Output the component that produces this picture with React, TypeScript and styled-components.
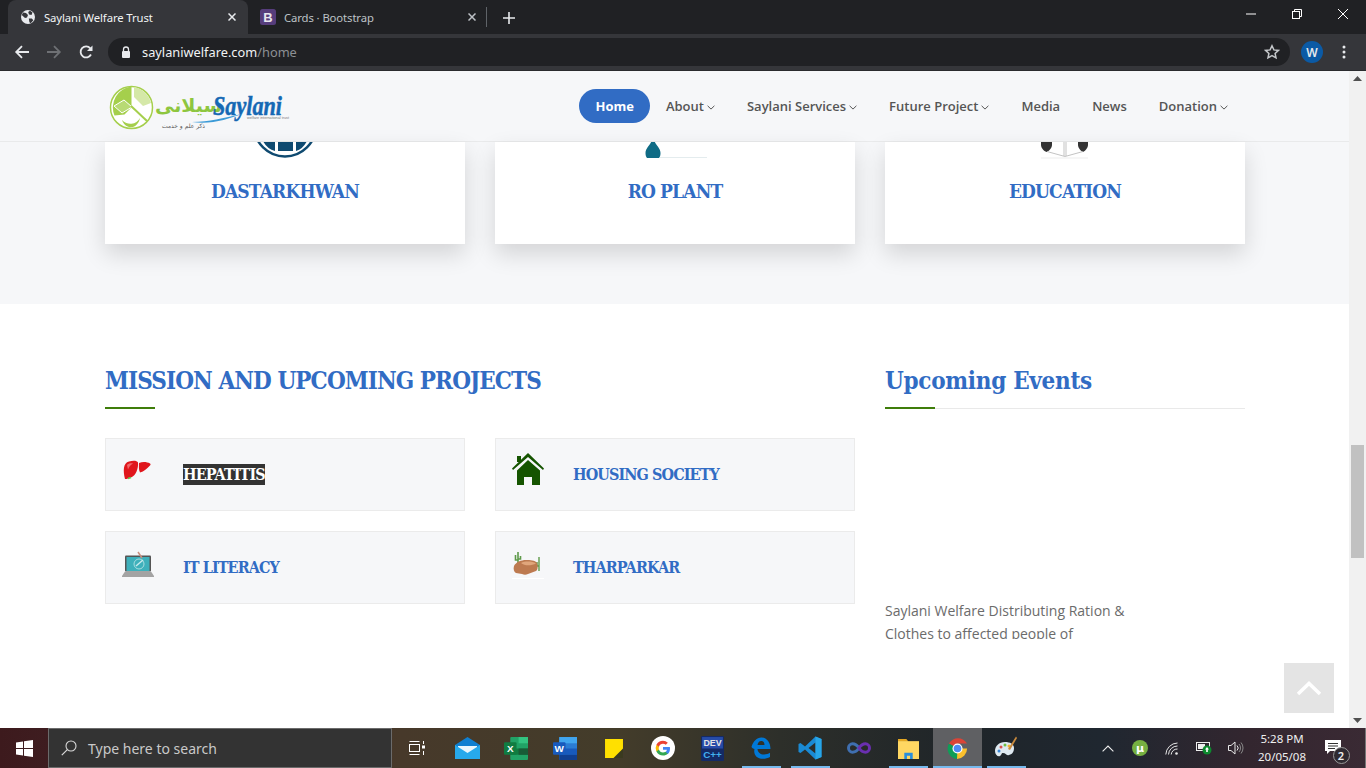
import React from "react";
import styled, { createGlobalStyle } from "styled-components";

const SERIF = `"DejaVu Serif Condensed", "DejaVu Serif", "Liberation Serif", serif`;

const Global = createGlobalStyle`
  html, body { margin: 0; padding: 0; overflow: hidden; background: #fff; }
  * { box-sizing: border-box; }
`;

const Shell = styled.div`
  width: 1366px; height: 768px; display: flex; flex-direction: column; overflow: hidden;
  font-family: "Open Sans", "Noto Sans", sans-serif;
`;

/* ---------- browser chrome ---------- */
const TabStrip = styled.div`
  height: 34px; background: #202124; display: flex; align-items: flex-end; padding-left: 8px; flex: none;
`;
const Tab = styled.div<{ $active?: boolean }>`
  width: 240px; height: 34px; border-radius: 8px 8px 0 0; display: flex; align-items: center;
  padding: 0 12px 0 12px; gap: 8px;
  background: ${p => (p.$active ? "#35363a" : "transparent")};
  color: ${p => (p.$active ? "#f1f3f4" : "#bdc1c6")};
  font: 11.3px "Noto Sans", "Open Sans", sans-serif; letter-spacing: -0.1px;
`;
const TabTitle = styled.span` flex: 1; white-space: nowrap; `;
const TabDivider = styled.div` width: 1px; height: 20px; background: #5f6368; margin: 0 0 7px -2px; `;
const NewTab = styled.div` margin: 0 0 10px 16px; display: flex; `;
const WindowControls = styled.div`
  margin-left: auto; align-self: flex-start; display: flex; align-items: center; height: 28px; gap: 36px; padding-right: 18px;
`;
const Toolbar = styled.div`
  height: 37px; background: #35363a; border-bottom: 1px solid #2a2b2e; display: flex; align-items: center; padding: 0 0 0 14px; flex: none;
`;
const NavIcons = styled.div` display: flex; align-items: center; gap: 16px; margin-right: 14px; `;
const Omnibox = styled.div`
  width: 1182px; height: 28px; border-radius: 14px; background: #202124; display: flex; align-items: center; padding: 0 10px 0 13px;
  font: 12.8px "Noto Sans", "Open Sans", sans-serif; color: #f1f3f4;
`;
const Url = styled.span` margin-left: 11px; flex: 1; `;
const UrlPath = styled.span` color: #8d9094; `;
const Avatar = styled.div`
  width: 22px; height: 22px; border-radius: 50%; background: #0b5aa5; color: #e8eaed; margin-left: 11px;
  display: flex; align-items: center; justify-content: center; font: 600 12px "Noto Sans", sans-serif;
`;
const MenuDots = styled.div` margin-left: 19px; display: flex; `;

/* ---------- page ---------- */
const Viewport = styled.div` flex: 1; display: flex; min-height: 0; `;
const Page = styled.div` flex: 1; position: relative; overflow: hidden; background: #fff; `;
const Header = styled.header`
  height: 71px; background: #f6f7f9; border-bottom: 1px solid #e9eaeb; display: flex; align-items: center;
  padding: 0 105px 0 108px;
`;
const Logo = styled.div` display: flex; align-self: flex-start; margin-top: 11px; `;
const Nav = styled.nav` margin-left: auto; display: flex; align-items: center; `;
const NavItem = styled.a<{ $active?: boolean }>`
  display: flex; align-items: center; height: 34px; white-space: nowrap; border-radius: 17px;
  padding: 0 16px;
  font: ${p => (p.$active ? 700 : 600)} 13px "Open Sans", sans-serif;
  color: ${p => (p.$active ? "#fff" : "#555")};
  background: ${p => (p.$active ? "#316cc4" : "transparent")};
`;
const Caret = styled.svg` margin-left: 3px; margin-top: 2px; `;

const ServicesBand = styled.section`
  background: #f6f7f9; padding: 0 105px 60px; display: grid; grid-template-columns: repeat(3, 360px); gap: 30px;
`;
const ServiceCard = styled.div`
  height: 102px; background: #fff; box-shadow: 0 10px 22px rgba(0, 0, 0, .14); display: flex; flex-direction: column; align-items: center;
`;
const CardIcon = styled.div`
  height: 17px; overflow: hidden; display: flex; justify-content: center; width: 100%;
  svg { margin-top: -1px; flex: none; }
`;
const CardTitle = styled.h3`
  margin: 19px 0 0; font: bold 19px/26px ${SERIF}; letter-spacing: -.85px; color: #316cc4;
`;

const Content = styled.section`
  padding: 60px 105px 0; display: grid; grid-template-columns: 750px 360px; gap: 30px;
`;
const SectionHead = styled.div<{ $rule?: boolean }>`
  position: relative; height: 45px; border-bottom: 1px solid ${p => (p.$rule ? "#e9e9e9" : "transparent")};
  &::after { content: ""; position: absolute; left: 0; bottom: -1px; width: 50px; height: 2px; background: #3f7d0a; }
`;
const SectionTitle = styled.h2<{ $tight?: boolean }>`
  margin: 0; font: bold 24px/34px ${SERIF}; color: #316cc4; white-space: nowrap;
  letter-spacing: ${p => (p.$tight ? "-.93px" : "-.3px")};
`;
const ProjectGrid = styled.div`
  margin-top: 29px; display: grid; grid-template-columns: repeat(2, 360px); gap: 20px 30px;
`;
const ProjectCard = styled.div`
  height: 73px; background: #f6f7f9; border: 1px solid #ebebeb; display: flex; align-items: center; padding: 0 0 0 15px;
`;
const ProjectIcon = styled.div` width: 33px; height: 33px; margin-top: -10px; margin-right: 29px; display: flex; align-items: center; justify-content: center; flex: none; `;
const ProjectName = styled.span<{ $selected?: boolean }>`
  font: bold 16px/21px ${SERIF}; letter-spacing: -.9px; white-space: nowrap;
  color: ${p => (p.$selected ? "#fff" : "#316cc4")};
  background: ${p => (p.$selected ? "#333" : "transparent")};
`;
const EventBody = styled.p`
  margin: 0; padding-top: 190px; height: 230px; overflow: hidden; width: 250px;
  font: 14px/23px "Open Sans", sans-serif; color: #6b6b6b;
`;
const ToTop = styled.div`
  position: absolute; right: 15px; bottom: 15px; width: 50px; height: 50px; background: #e4e4e4; display: flex; align-items: center; justify-content: center;
`;

const Scrollbar = styled.div`
  width: 17px; background: #f1f1f1; display: flex; flex-direction: column; align-items: center; justify-content: space-between; padding: 5px 0; position: relative; flex: none;
`;
const Thumb = styled.div` position: absolute; top: 374px; left: 2px; width: 13px; height: 113px; background: #c1c1c1; `;

/* ---------- taskbar ---------- */
const Taskbar = styled.footer`
  height: 40px; flex: none; display: flex; align-items: stretch; color: #fff;
  background: linear-gradient(90deg, #3d1a1d 0, #3e1d20 48px, #47392a 400px, #433c2a 620px, #2d2f2a 780px, #1f2529 960px, #1f2730 1100px, #33262f 1250px, #3a2a34 1366px);
`;
const StartButton = styled.div` width: 48px; display: flex; align-items: center; justify-content: center; `;
const SearchBox = styled.div`
  width: 344px; background: #333; border: 1px solid #6b6b6b; display: flex; align-items: center; padding-left: 12px; gap: 11px;
  font: 14px "Noto Sans", "Open Sans", sans-serif; color: #c9c9c9;
`;
const TaskApps = styled.div` display: flex; `;
const TaskApp = styled.div<{ $open?: boolean; $active?: boolean }>`
  width: 49px; display: flex; align-items: center; justify-content: center; position: relative;
  background: ${p => (p.$active ? "#5f6063" : "transparent")};
  &:first-child { width: 50.5px; padding-right: 1.5px; }
  &::after {
    content: ""; position: absolute; left: ${p => (p.$active ? "0" : "5px")}; right: ${p => (p.$active ? "0" : "5px")};
    bottom: 0; height: 2px; background: ${p => (p.$open ? "#76b9ed" : "transparent")};
  }
`;
const Tray = styled.div` margin-left: auto; display: flex; align-items: center; padding-right: 10px; border-right: 1px solid #777; `;
const TrayIcon = styled.div` width: 32px; display: flex; justify-content: center; align-items: center; `;
const Clock = styled.div`
  width: 58px; margin-left: 1px; text-align: center; font: 11.5px/18px "Noto Sans", "Open Sans", sans-serif; color: #f0f0f0;
`;
const Notify = styled.div` width: 44px; align-self: stretch; display: flex; justify-content: center; align-items: center; padding-bottom: 3px; position: relative; `;
const NotifyBadge = styled.span`
  position: absolute; left: 21.5px; top: 19px; width: 17px; height: 17px; border-radius: 50%; border: 1px solid #999; background: #2f2a31;
  font: 600 11px/15px "Noto Sans", sans-serif; text-align: center; color: #eee;
`;

/* ---------- drawings ---------- */
const Caretdown = () => (
  <Caret width="8" height="5" viewBox="0 0 8 5"><path d="M.6.8L4 4.100 7.400.8" fill="none" stroke="#555" strokeWidth="1" /></Caret>
);

const SaylaniLogo = () => (
  <svg width="184" height="50" viewBox="0 0 184 50">
    <circle cx="23.500" cy="25.500" r="21" fill="#fff" stroke="#a5cf4c" strokeWidth="1.500" />
    <path d="M23.500 4.500v21l-7 7-10 1A21 21 0 0 1 23.500 4.500z" fill="#a5cf4c" />
    <path d="M6 24l10-6 8 7-10 6z" fill="#b8da74" stroke="#fff" strokeWidth="1" />
    <path d="M26 5a21 21 0 0 1 17 16l-8 3-9-9z" fill="#d5e8a8" />
    <path d="M23 24l16 15" stroke="#a5cf4c" strokeWidth="2" />
    <path d="M32 36a11 11 0 0 1-18 2c2 6 7 8 11 7 3-1 6-4 7-9z" fill="#a5cf4c" />
    <text x="47" y="30" fontFamily="'DejaVu Sans', sans-serif" fontWeight="700" fontSize="19" fill="#8ec63f">سیلانی</text>
    <text x="105" y="33" fontFamily="'Liberation Serif', serif" fontStyle="italic" fontWeight="700" fontSize="28" fill="#1568b4" stroke="#1568b4" strokeWidth=".5" textLength="69" lengthAdjust="spacingAndGlyphs">Saylani</text>
    <path d="M84 40c18 0 30-4 50-8-14 5-31 11-50 8z" fill="#3c9bd7" />
    <text x="139" y="37" fontFamily="'Liberation Sans', sans-serif" fontSize="4" fill="#777" textLength="42" lengthAdjust="spacingAndGlyphs">welfare international trust</text>
    <text x="54" y="46" fontFamily="'DejaVu Sans', sans-serif" fontSize="6" fill="#555">ذکر علم و خدمت</text>
  </svg>
);

const GlobeIcon = () => (
  <svg width="16" height="16" viewBox="0 0 16 16">
    <circle cx="8" cy="8" r="7" fill="#e8eaed" />
    <path d="M3 3.500l3 .5 2 2-1 2.500-2 .5-3.200-3zM10 1.800l2.500 1.800-1 2.400-2.500-.5-.8-2.500zM8.800 9.500h3l1.500 1.800-2.600 3-1.300-1z" fill="#35363a" />
  </svg>
);
const BootstrapIcon = () => (
  <svg width="16" height="16" viewBox="0 0 16 16">
    <rect width="16" height="16" rx="2.500" fill="#563d7c" />
    <text x="8" y="12.500" textAnchor="middle" fontFamily="'Liberation Sans', sans-serif" fontWeight="700" fontSize="13" fill="#e8e6ee">B</text>
  </svg>
);
const CloseX = ({ color }: { color: string }) => (
  <svg width="8" height="8" viewBox="0 0 8 8"><path d="M.5.5l7 7M7.500.5l-7 7" stroke={color} strokeWidth="1.500" /></svg>
);
const Arrow = ({ color, flip }: { color: string; flip?: boolean }) => (
  <svg width="16" height="16" viewBox="0 0 16 16" style={flip ? { transform: "scaleX(-1)" } : undefined}>
    <path d="M15 8H2.500M8 2.200L2.200 8 8 13.800" fill="none" stroke={color} strokeWidth="1.800" />
  </svg>
);
const Reload = () => (
  <svg width="16" height="16" viewBox="0 0 16 16">
    <path d="M13 10.500A5.500 5.500 0 1 1 12.300 4.300" fill="none" stroke="#e8eaed" strokeWidth="1.800" />
    <path d="M14.500 1.500v5.500H9z" fill="#e8eaed" />
  </svg>
);
const Lock = () => (
  <svg width="10" height="12" viewBox="0 0 10 12">
    <path d="M2.500 5V3.500a2.500 2.500 0 0 1 5 0V5" fill="none" stroke="#e8eaed" strokeWidth="1.300" />
    <rect x="1" y="5" width="8" height="7" rx="1" fill="#e8eaed" />
  </svg>
);
const Star = () => (
  <svg width="16" height="16" viewBox="0 0 16 16">
    <path d="M8 1.800l1.900 4.100 4.500.5-3.300 3 .9 4.500L8 11.600l-4 2.300.9-4.500-3.300-3 4.500-.5z" fill="none" stroke="#c4c7ca" strokeWidth="1.500" />
  </svg>
);

const Dastarkhwan = () => (
  <svg width="60" height="18" viewBox="0 0 60 18">
    <circle cx="30" cy="-15.500" r="31" fill="none" stroke="#0f4a70" strokeWidth="2.500" />
    <rect x="23" y="0" width="15" height="10" fill="#0f4a70" />
    <path d="M8 0h12v10Q12 8 8 0zM52 0H41v10Q48 8 52 0z" fill="#0f4a70" />
  </svg>
);
const RoPlant = () => (
  <svg width="70" height="18" viewBox="0 0 70 18">
    <path d="M11.500 0h3c1 4 6 7 6 12 0 2-.5 4-1.500 5H7c-1-1-1.500-3-1.500-5 0-5 5-8 6-12z" fill="#0f6b85" />
    <rect x="20" y="16" width="47" height="1" fill="#e4ecee" />
  </svg>
);
const Education = () => (
  <svg width="50" height="18" viewBox="0 0 50 18">
    <path d="M1 0h11v4c0 3-3 6-5.500 7C4 10 1 7 1 4zM38 0h10v4c0 3-3 6-5 7-2-1-5-4-5-7z" fill="#333" />
    <path d="M7 10.500l18 5 18-5M24 0v15M26 0v15" fill="none" stroke="#b4b4b4" strokeWidth=".8" />
    <rect x="1" y="16.500" width="47" height="1" fill="#eee" />
  </svg>
);

const Liver = () => (
  <svg width="30" height="22" viewBox="0 0 30 22">
    <path d="M2 20C0 12 0 4 6 2.500c4-1 8-1 9 1 .5 6-2 13-7 15-2 .8-4 1.500-6 1.500z" fill="#e0161c" />
    <path d="M16 4c4-1.500 8-1 11 .5 1 .5.5 1.500 0 2-3 3-6 6-10 7-1.500-3-1-6-1-9.500z" fill="#e0161c" />
    <path d="M4 6c1-1.500 4-2 6-1.500-2 1-4 3-5 6z" fill="#f0686b" />
    <path d="M5 19.500l3-1" stroke="#5ccf4e" strokeWidth="1.500" />
  </svg>
);
const House = () => (
  <svg width="32" height="33" viewBox="0 0 32 33">
    <path d="M0 15.500L16 0l16 15.500-1 1.500L16 4 1 17z" fill="#155400" />
    <rect x="5" y="3" width="4" height="6" fill="#155400" />
    <path d="M5 17.500L16 7l12 10.500V32h-8v-8h-8v8H5z" fill="#155400" />
  </svg>
);
const Laptop = () => (
  <svg width="32" height="28" viewBox="0 0 32 28">
    <rect x="3" y="6.500" width="26" height="16" rx="1" fill="#555" />
    <rect x="4.500" y="8" width="23" height="14" fill="#3eb0bb" />
    <circle cx="17" cy="15" r="5" fill="none" stroke="#a8dde0" strokeWidth="1" />
    <path d="M14 17l7-6" stroke="#c8eaec" strokeWidth="1.500" />
    <path d="M16 3l4 6" stroke="#c98e7e" strokeWidth="1.500" />
    <path d="M3 22.500h26l3 4.500v1H0v-1z" fill="#a3a3a3" />
  </svg>
);
const Desert = () => (
  <svg width="32" height="33" viewBox="0 0 32 33">
    <path d="M6 6v13M3.500 9v5H6M8.500 10v3H6" fill="none" stroke="#5e9a4a" strokeWidth="1.600" />
    <path d="M27 11v14M25 16v4h2" fill="none" stroke="#5e9a4a" strokeWidth="1.400" />
    <path d="M2 20c2-4 7-6 12-6 4 0 9 0 11 3 1 3 1 7-1 8l-8 3c-2 1-4 1-6 0l-6-1c-2-1-3-4-2-7z" fill="#bd7a50" />
    <path d="M9 17c4-2 11-2 15 .5-4 2-11 3-15-.5z" fill="#e0a67c" />
    <rect y="32" width="32" height="1" fill="#fff" />
  </svg>
);

const WinLogo = () => (
  <svg width="17" height="17" viewBox="0 0 17 17">
    <path d="M0 2.400l7-1v6.600H0zM8 1.200L17 0v8H8zM0 9h7v6.600l-7-1zM8 9h9v8l-9-1.200z" fill="#fff" />
  </svg>
);
const SearchGlass = () => (
  <svg width="16" height="16" viewBox="0 0 16 16">
    <circle cx="10" cy="6" r="5" fill="none" stroke="#d8d8d8" strokeWidth="1.100" />
    <path d="M6.300 9.700L.8 15.200" stroke="#d8d8d8" strokeWidth="1.200" />
  </svg>
);
const TaskView = () => (
  <svg width="16" height="16" viewBox="0 0 16 16" fill="none" stroke="#fff" strokeWidth="1">
    <rect x=".5" y="4.500" width="10" height="7" />
    <path d="M.5 1.500h10M.5 14.500h10M14.500 1v3M14.500 11v4" />
    <rect x="13" y="5.500" width="3" height="3" fill="#fff" stroke="none" />
  </svg>
);
const MailIcon = () => (
  <svg width="25" height="22" viewBox="0 0 25 22">
    <path d="M0 8L12.500 0 25 8v14H0z" fill="#0f7fd1" />
    <path d="M3 9h19v6l-9.500 5L3 15z" fill="#e9f6fd" />
    <path d="M0 8l12.500 8L25 8v14H0z" fill="#27a9ec" />
  </svg>
);
const ExcelIcon = () => (
  <svg width="24" height="23" viewBox="0 0 23 22">
    <rect x="6" y="0" width="17" height="22" rx="1" fill="#21a366" />
    <rect x="14" y="0" width="9" height="6" fill="#33c481" />
    <rect x="6" y="11" width="17" height="6" fill="#107c41" />
    <rect x="14" y="11" width="9" height="6" fill="#185c37" />
    <rect x="0" y="5" width="12" height="12" rx="1" fill="#107c41" />
    <text x="6" y="14.500" textAnchor="middle" fontFamily="'Liberation Sans', sans-serif" fontWeight="700" fontSize="9.500" fill="#fff">X</text>
  </svg>
);
const WordIcon = () => (
  <svg width="24" height="23" viewBox="0 0 23 22">
    <rect x="6" y="0" width="17" height="22" rx="1" fill="#2b7cd3" />
    <rect x="6" y="0" width="17" height="6" fill="#41a5ee" />
    <rect x="6" y="11" width="17" height="6" fill="#185abd" />
    <rect x="6" y="17" width="17" height="5" fill="#103f91" />
    <rect x="0" y="5" width="12" height="12" rx="1" fill="#185abd" />
    <text x="6" y="14.500" textAnchor="middle" fontFamily="'Liberation Sans', sans-serif" fontWeight="700" fontSize="9.500" fill="#fff">W</text>
  </svg>
);
const StickyIcon = () => (
  <svg width="18" height="19" viewBox="0 0 17 18">
    <rect width="17" height="18" fill="#ffe000" />
    <path d="M17 9l-9 9h9z" fill="#3a3a20" />
  </svg>
);
const GoogleIcon = () => (
  <svg width="24" height="24" viewBox="0 0 48 48">
    <circle cx="24" cy="24" r="24" fill="#fff" />
    <path d="M38 25c0-1-.1-2-.3-3H24v5.700h7.900c-.4 2-1.400 3.500-3 4.600v3.800h4.800C36.500 33.500 38 29.600 38 25z" fill="#4285f4" />
    <path d="M24 39c4 0 7.300-1.300 9.700-3.600l-4.800-3.800c-1.300.9-3 1.400-4.900 1.400-3.800 0-7-2.500-8.100-6h-5v3.900C13.300 35.800 18.300 39 24 39z" fill="#34a853" />
    <path d="M15.900 27c-.6-1.800-.6-3.900 0-5.700v-3.900h-5a15 15 0 0 0 0 13.500z" fill="#fbbc05" />
    <path d="M24 15.300c2.100 0 4 .7 5.500 2.200l4.200-4.200A14.500 14.500 0 0 0 24 9.500c-5.700 0-10.700 3.200-13.100 7.900l5 3.900c1.100-3.500 4.300-6 8.100-6z" fill="#ea4335" />
  </svg>
);
const DevIcon = () => (
  <svg width="23" height="25" viewBox="0 0 22 24">
    <rect width="22" height="24" rx="1" fill="#142a66" />
    <rect x="1" y="1" width="20" height="11" fill="#274ca8" />
    <text x="11" y="10" textAnchor="middle" fontFamily="'Liberation Sans', sans-serif" fontWeight="700" fontSize="8.500" fill="#e6e6e6">DEV</text>
    <text x="11" y="21" textAnchor="middle" fontFamily="'Liberation Sans', sans-serif" fontWeight="700" fontSize="9.500" fill="#43b1ee">C++</text>
  </svg>
);
const EdgeIcon = () => (
  <svg width="20" height="22" viewBox="0 0 20 22">
    <path d="M.5 10C2 4 6.500 0 11 .5c5 .5 8.500 5 8.500 11.500H6.500c.2 3.500 3 5.500 6.500 5.500 2.200 0 4.500-.7 6-1.700v4.200c-2 1.200-4.600 1.800-7 1.800C5.500 21.800 2.200 17 3.500 12 2.700 12 1.200 11 .5 10zm6-2h7c0-2.500-1.200-4-3.300-4C8 4 6.800 5.800 6.500 8z" fill="#0078d7" />
  </svg>
);
const VSCodeIcon = () => (
  <svg width="24" height="24" viewBox="0 0 24 24">
    <path d="M17.500.5L7 10.500 2.500 7 .5 8v8l2 1L7 13.500 17.500 23.500 23.500 21V3zM17.500 6.500v11L10.500 12z" fill="#1a8ad4" />
    <path d="M17.500.5l6 2.500v18l-6 2.500z" fill="#27a6e8" />
  </svg>
);
const InfinityIcon = () => (
  <svg width="24" height="12" viewBox="0 0 24 12" fill="none" strokeWidth="3">
    <path d="M12 6C10 3 7.500 1.800 5.500 1.800S1.500 3.500 1.500 6s2 4.200 4 4.200S10 9 12 6z" stroke="#3f6fb0" />
    <path d="M12 6c2-3 4.500-4.200 6.500-4.200s4 1.700 4 4.200-2 4.200-4 4.200S14 9 12 6z" stroke="#6a2fb0" />
  </svg>
);
const FolderIcon = () => (
  <svg width="21" height="21" viewBox="0 0 20 20">
    <path d="M0 1h8l2 2.500H0z" fill="#e5a823" />
    <rect y="3" width="20" height="17" fill="#ffd762" />
    <path d="M6 20v-6h8v6h-2.500v-3h-3v3z" fill="#2a8fdc" />
  </svg>
);
const ChromeIcon = () => (
  <svg width="23" height="23" viewBox="0 0 48 48">
    <path d="M24 24L6 13.500A22 22 0 0 1 44 13.500H24z" fill="#db4437" />
    <path d="M24 24L6 13.500A22 22 0 0 0 23 46l10-20z" fill="#0f9d58" />
    <path d="M24 24h20A22 22 0 0 1 23 46z" fill="#fbc02d" />
    <circle cx="24" cy="24" r="10.500" fill="#fff" />
    <circle cx="24" cy="24" r="8" fill="#4e8bf5" />
  </svg>
);
const PaletteIcon = () => (
  <svg width="24" height="24" viewBox="0 0 24 24">
    <path d="M11 6C5 6 1 10 1 15c0 4 3 6 5 5 2-1 1-3 3-3 3 0 3 3 6 2 4-1 5-4 5-7 0-4-4-6-9-6z" fill="#dfeaf2" />
    <circle cx="7" cy="11" r="1.500" fill="#d9534f" /><circle cx="11" cy="9" r="1.500" fill="#6fbf45" /><circle cx="15" cy="10" r="1.500" fill="#f2b632" /><circle cx="5" cy="15" r="1.500" fill="#3a87d6" />
    <path d="M22 .5L14 13l2 1L23 2z" fill="#c98a3d" />
  </svg>
);
const UTorrent = () => (
  <svg width="16" height="16" viewBox="0 0 16 16">
    <circle cx="8" cy="8" r="8" fill="#76b041" />
    <text x="8" y="12" textAnchor="middle" fontFamily="'DejaVu Sans', sans-serif" fontWeight="700" fontSize="11" fill="#fff">µ</text>
  </svg>
);
const Chevron = () => (
  <svg width="12" height="7" viewBox="0 0 12 7"><path d="M.6 6.400L6 1l5.400 5.400" fill="none" stroke="#eee" strokeWidth="1.100" /></svg>
);
const Wifi = () => (
  <svg width="14" height="13" viewBox="0 0 14 13" fill="none" stroke="#e8e8e8" strokeWidth="1">
    <path d="M.8 12.500A12 12 0 0 1 12.500 1M3.500 12.500A9 9 0 0 1 12.500 4M6.200 12.500A6 6 0 0 1 12.500 7" />
    <circle cx="11.500" cy="11.500" r="1.300" fill="#e8e8e8" stroke="none" />
  </svg>
);
const Battery = () => (
  <svg width="16" height="14" viewBox="0 0 16 14">
    <rect x=".5" y="1.500" width="13" height="8" fill="none" stroke="#eee" />
    <rect x="2" y="3" width="7" height="5" fill="#eee" />
    <circle cx="11" cy="9" r="4.500" fill="#0c8a2e" />
    <path d="M11 6l2 2.500h-1.200V11h-1.600V8.500H9z" fill="#fff" />
  </svg>
);
const Speaker = () => (
  <svg width="16" height="14" viewBox="0 0 16 14" fill="none" stroke="#e8e8e8" strokeWidth="1">
    <path d="M.5 4.500h2.500L7 1v12L3 9.500H.5z" />
    <path d="M9 4.500a3.500 3.500 0 0 1 0 5" />
    <path d="M11 3a6 6 0 0 1 0 8M13 1.500a8.500 8.500 0 0 1 0 11" stroke="#8a8a8a" />
  </svg>
);
const NoteIcon = () => (
  <svg width="16" height="14" viewBox="0 0 16 14">
    <path d="M0 0h16v11H5l-3 3v-3H0z" fill="#fff" />
    <path d="M3 3.500h10M3 6h10M3 8.500h7" stroke="#333" strokeWidth="1" />
  </svg>
);

const services = [
  { title: "DASTARKHWAN", Icon: Dastarkhwan },
  { title: "RO PLANT", Icon: RoPlant },
  { title: "EDUCATION", Icon: Education },
];
const projects = [
  { name: "HEPATITIS", Icon: Liver, selected: true },
  { name: "HOUSING SOCIETY", Icon: House },
  { name: "IT LITERACY", Icon: Laptop },
  { name: "THARPARKAR", Icon: Desert },
];
const navItems = [
  { label: "Home", active: true },
  { label: "About", caret: true },
  { label: "Saylani Services", caret: true },
  { label: "Future Project", caret: true },
  { label: "Media" },
  { label: "News" },
  { label: "Donation", caret: true },
];
const taskApps = [
  { Icon: TaskView },
  { Icon: MailIcon },
  { Icon: ExcelIcon },
  { Icon: WordIcon },
  { Icon: StickyIcon },
  { Icon: GoogleIcon },
  { Icon: DevIcon },
  { Icon: EdgeIcon, open: true },
  { Icon: VSCodeIcon, open: true },
  { Icon: InfinityIcon },
  { Icon: FolderIcon, open: true },
  { Icon: ChromeIcon, open: true, active: true },
  { Icon: PaletteIcon, open: true },
];

export default function App() {
  return (
    <Shell>
      <Global />
      <TabStrip>
        <Tab $active>
          <GlobeIcon />
          <TabTitle>Saylani Welfare Trust</TabTitle>
          <CloseX color="#e8eaed" />
        </Tab>
        <Tab>
          <BootstrapIcon />
          <TabTitle>Cards · Bootstrap</TabTitle>
          <CloseX color="#bdc1c6" />
        </Tab>
        <TabDivider />
        <NewTab>
          <svg width="12" height="12" viewBox="0 0 12 12"><path d="M6 0v12M0 6h12" stroke="#e8eaed" strokeWidth="1.600" /></svg>
        </NewTab>
        <WindowControls>
          <svg width="10" height="10" viewBox="0 0 10 10"><path d="M0 5h10" stroke="#fff" /></svg>
          <svg width="10" height="10" viewBox="0 0 10 10" fill="none" stroke="#fff"><path d="M2.500 2.500V.5h7v7h-2" /><rect x=".5" y="2.500" width="7" height="7" /></svg>
          <svg width="10" height="10" viewBox="0 0 10 10"><path d="M0 0l10 10M10 0L0 10" stroke="#fff" /></svg>
        </WindowControls>
      </TabStrip>
      <Toolbar>
        <NavIcons>
          <Arrow color="#e8eaed" />
          <Arrow color="#6e7074" flip />
          <Reload />
        </NavIcons>
        <Omnibox>
          <Lock />
          <Url>saylaniwelfare.com<UrlPath>/home</UrlPath></Url>
          <Star />
        </Omnibox>
        <Avatar>W</Avatar>
        <MenuDots>
          <svg width="4" height="14" viewBox="0 0 4 14" fill="#e8eaed"><circle cx="2" cy="2" r="1.500" /><circle cx="2" cy="7" r="1.500" /><circle cx="2" cy="12" r="1.500" /></svg>
        </MenuDots>
      </Toolbar>
      <Viewport>
        <Page>
          <Header>
            <Logo><SaylaniLogo /></Logo>
            <Nav>
              {navItems.map(n => (
                <NavItem key={n.label} $active={n.active}>
                  {n.label}{n.caret && <Caretdown />}
                </NavItem>
              ))}
            </Nav>
          </Header>
          <ServicesBand>
            {services.map(({ title, Icon }) => (
              <ServiceCard key={title}>
                <CardIcon><Icon /></CardIcon>
                <CardTitle>{title}</CardTitle>
              </ServiceCard>
            ))}
          </ServicesBand>
          <Content>
            <div>
              <SectionHead><SectionTitle $tight>MISSION AND UPCOMING PROJECTS</SectionTitle></SectionHead>
              <ProjectGrid>
                {projects.map(({ name, Icon, selected }) => (
                  <ProjectCard key={name}>
                    <ProjectIcon><Icon /></ProjectIcon>
                    <ProjectName $selected={selected}>{name}</ProjectName>
                  </ProjectCard>
                ))}
              </ProjectGrid>
            </div>
            <div>
              <SectionHead $rule><SectionTitle>Upcoming Events</SectionTitle></SectionHead>
              <EventBody>Saylani Welfare Distributing Ration &amp; Clothes to affected people of Tharparkar and nearby areas</EventBody>
            </div>
          </Content>
          <ToTop>
            <svg width="26" height="15" viewBox="0 0 26 15"><path d="M2 13L13 2.500 24 13" fill="none" stroke="#fff" strokeWidth="3.500" /></svg>
          </ToTop>
        </Page>
        <Scrollbar>
          <svg width="9" height="5" viewBox="0 0 9 5"><path d="M4.500 0L9 5H0z" fill="#505050" /></svg>
          <Thumb />
          <svg width="9" height="5" viewBox="0 0 9 5"><path d="M4.500 5L9 0H0z" fill="#505050" /></svg>
        </Scrollbar>
      </Viewport>
      <Taskbar>
        <StartButton><WinLogo /></StartButton>
        <SearchBox><SearchGlass />Type here to search</SearchBox>
        <TaskApps>
          {taskApps.map(({ Icon, open, active }, i) => (
            <TaskApp key={i} $open={open} $active={active}><Icon /></TaskApp>
          ))}
        </TaskApps>
        <Tray>
          <TrayIcon><Chevron /></TrayIcon>
          <TrayIcon><UTorrent /></TrayIcon>
          <TrayIcon><Wifi /></TrayIcon>
          <TrayIcon><Battery /></TrayIcon>
          <TrayIcon><Speaker /></TrayIcon>
          <Clock>5:28 PM<br />20/05/08</Clock>
          <Notify><NoteIcon /><NotifyBadge>2</NotifyBadge></Notify>
        </Tray>
      </Taskbar>
    </Shell>
  );
}
